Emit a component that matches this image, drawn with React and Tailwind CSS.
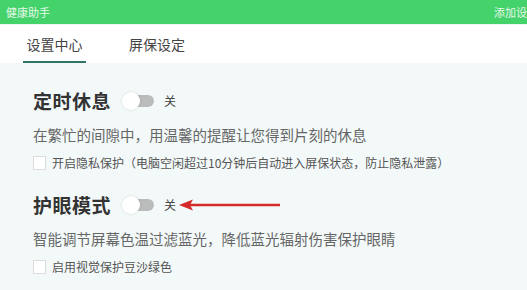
import React, { useState } from "react";

const Toggle = ({ on, onChange }) => (
  <button
    onClick={onChange}
    className="relative w-[36px] h-[18px] flex items-center"
  >
    {/* track */}
    <span className="absolute left-[12px] w-[20px] h-[12px] rounded-r-full bg-[#b9bcbb]" />
    {/* knob */}
    <span className="absolute left-0 w-[18px] h-[18px] rounded-full bg-white shadow-[0_0_3px_rgba(0,0,0,0.12)]" />
  </button>
);

const Check = ({ label }) => (
  <label className="flex items-center gap-[6px] h-[16px] text-[12px] leading-[16px] text-[#555]">
    <span className="w-[13px] h-[14px] bg-white border border-[#dcdcdc]" />
    {label}
  </label>
);

const Section = ({ title, desc, option, arrow }) => {
  const [on, setOn] = useState(false);
  return (
    <div className="flex flex-col">
      <div className="flex items-center h-[30px]">
        <h2 className="text-[19px] leading-[30px] font-bold text-[#333] tracking-[0.5px]">{title}</h2>
        <div className="ml-[11px]">
          <Toggle on={on} onChange={() => setOn(!on)} />
        </div>
        <span className="ml-[6px] text-[12px] text-[#444]">{on ? "开" : "关"}</span>
        {arrow && (
          <svg width="104" height="14" viewBox="0 0 104 14" className="ml-[2px]">
            <path d="M12 7 L102 7" stroke="#d42a2a" strokeWidth="2.5" />
            <path d="M1 7 L15 1.5 L12 7 L15 12.5 Z" fill="#d42a2a" />
          </svg>
        )}
      </div>
      <p className="mt-[9px] text-[14.5px] leading-[20px] text-[#666]">{desc}</p>
      <div className="mt-[10px]">
        <Check label={option} />
      </div>
    </div>
  );
};

export default function App() {
  const [tab, setTab] = useState(0);
  const tabs = ["设置中心", "屏保设定"];

  return (
    <div
      className="w-[527px] h-[290px] overflow-hidden flex flex-col bg-[#f3f9f9]"
      style={{ fontFamily: '"Noto Sans CJK SC", "Liberation Sans", sans-serif' }}
    >
      {/* title bar */}
      <div className="h-[24px] shrink-0 bg-[#44d36a] flex items-center justify-between pl-[6px] text-[11px] text-[#e6f7ea]">
        <span>健康助手</span>
        <span className="w-[33px] overflow-hidden whitespace-nowrap">添加设</span>
      </div>

      {/* tabs */}
      <div className="h-[39px] shrink-0 bg-white flex items-stretch pl-[23px] gap-[41px] border-t border-[#eef7f0]">
        {tabs.map((t, i) => (
          <button
            key={t}
            onClick={() => setTab(i)}
            className={`relative px-[2px] text-[14px] text-[#444] ${i === 0 ? "w-[63px]" : ""}`}
          >
            {t}
            {tab === i && (
              <span className="absolute left-0 right-0 bottom-0 h-[2px] bg-[#2e7565]" />
            )}
          </button>
        ))}
      </div>

      {/* content */}
      <div className="flex flex-col gap-[19px] pl-[33px] pt-[23px]">
        <Section
          title="定时休息"
          desc="在繁忙的间隙中，用温馨的提醒让您得到片刻的休息"
          option="开启隐私保护（电脑空闲超过10分钟后自动进入屏保状态，防止隐私泄露）"
        />
        <Section
          title="护眼模式"
          desc="智能调节屏幕色温过滤蓝光，降低蓝光辐射伤害保护眼睛"
          option="启用视觉保护豆沙绿色"
          arrow
        />
      </div>
    </div>
  );
}
